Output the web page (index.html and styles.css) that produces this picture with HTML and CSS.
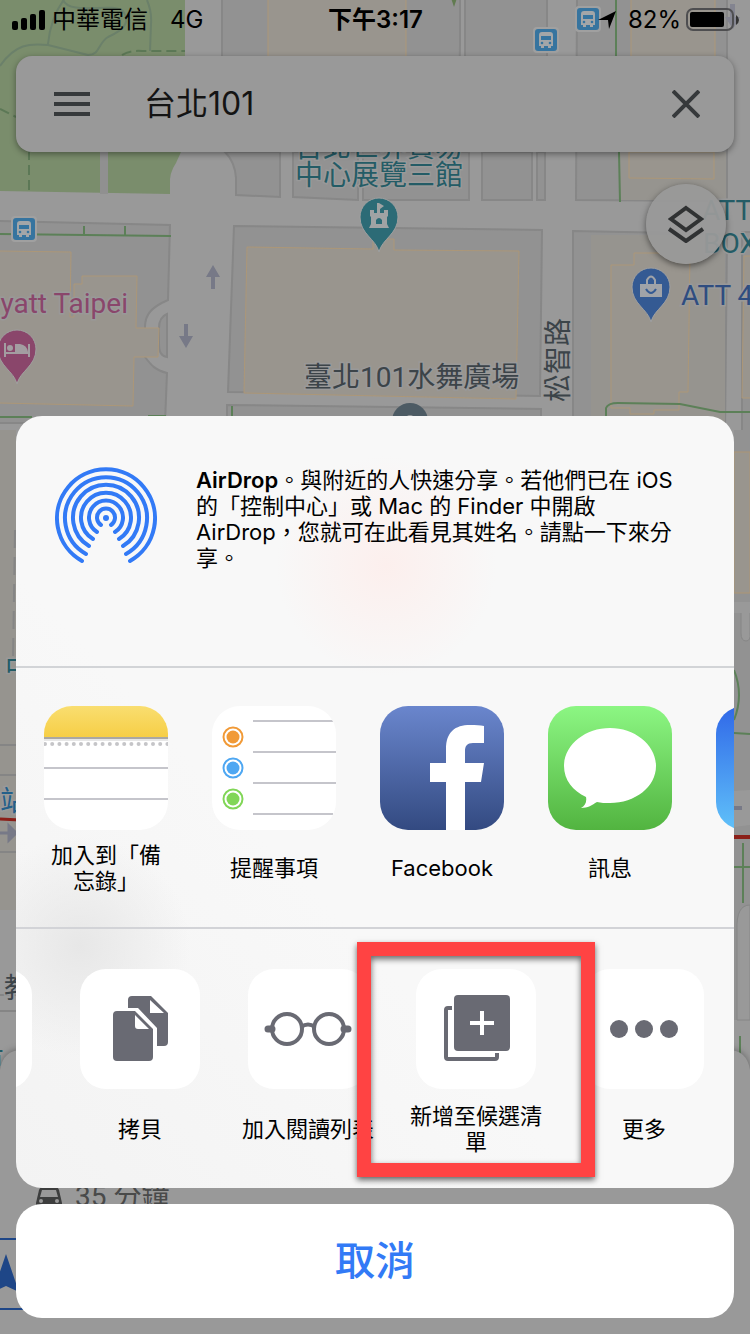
FILE: index.html
```html
<!DOCTYPE html>
<html lang="zh-Hant">
<head>
    <meta charset="UTF-8">
    <meta name="viewport" content="width=device-width, initial-scale=1.0">
    <title>台北101</title>
    <link rel="stylesheet" href="styles.css">
</head>
<body>
    <!-- Map -->
    <svg class="map" viewBox="0 0 750 1334" preserveAspectRatio="xMidYMin slice" aria-hidden="true">
        <defs>
            <g id="bus">
                <rect x="-2" y="-2" width="26" height="26" rx="4" fill="#a0a0a0"/>
                <rect width="22" height="22" rx="3" fill="#36749f"/>
                <path d="M4 6q0-3 3-3h8q3 0 3 3v11h-2v2h-3v-2H9v2H6v-2H4z" fill="#a3a6a8"/>
                <path d="M6 7h10v4H6z" fill="#36749f"/>
                <circle cx="7" cy="14" r="1.3" fill="#36749f"/>
                <circle cx="15" cy="14" r="1.3" fill="#36749f"/>
            </g>
            <path id="pin" d="M0 35C-3 22-19 17-19 0a19 19 0 0 1 38 0C19 17 3 22 0 35z" stroke="#a0a0a0" stroke-width="1"/>
        </defs>

        <g class="park">
            <path d="M0 0h185v53H185v90l-9 20q-7 10-6 22v9L0 191z"/>
        </g>
        <path class="road-fill" d="M100 150h8v44h-8z"/>
        <g class="trail">
            <path d="M0 66c15-22 30-23 48-21l40 10c12 0 10-12 20-18 18-8 22-16 15-26C112 2 70 16 63 0M48 44c2-20 8-34 17-46M147 0q5 12 4 24l-1 27"/>
        </g>
        <path class="dash" d="M122 55q8-5 20-4h43M0 109l16 8M29 150v43"/>

        <g class="block">
            <path d="M222-2h238v45q0 12-2 60H222zM465-2h82v60h-82zM577-2h150v203l-151-1zM225 152q10 10 11 26v17l44 2v-45zM293 152h65v48l-65-3zM363 152h106v48H363zM482 152h50v48h-50zM537 152h8v48h-8z"/>
            <path d="M-2 221l172 4-2 75c-16 7-23 14-23 27v30c6 8 10 13 22 16l-2 50H-2zM234 226l308 4-2 166-312-4z"/>
            <path d="M167 314v43c-6-1-8-5-8-14v-15c0-8 3-12 8-14zM227 405l314 4v20H227zM573 231l154 3-2 200H573zM742 232h12v200h-12z"/>
        </g>
        <path class="plot" d="M591 235h134v200H591zM620 152h106v48H620z"/>

        <g class="building">
            <path d="M268-2h138v60H268zM631-2h84v60h-84zM629 152h85v27l-85-1z"/>
            <path d="M-2 251l73 1-1 65h4v-33h8v-8h55l-1 52h23l-1 29h-24l-1 49-135-3zM247 247l126 2v-10h21v11l125 1-3 148-272-6zM611 265h23v-12h56l-2 139h-9v18h-25v4h-24v-6h-19z"/>
            <path d="M744 256h12v142h-14z"/>
        </g>
        <path class="green-line" d="M0 234l171 2M84 226v9M125 226v9M616-2v60M619 152l1 50M606 430v-22q2-5 12-5l62 1 40 8h34"/>
        <path class="green-line" d="M0 417h32M232 406v10M148 416h18"/>

        <!-- one way arrows -->
        <g fill="#777987">
            <path d="M213 265l7 12h-5v12h-4v-12h-5zM186 348l-7-12h5v-12h4v12h5z"/>
            <path d="M730 4h5v13h5l-7 12-8-12h5z" fill="#838490"/>
        </g>
        <use href="#bus" x="13" y="218"/>
        <use href="#bus" x="577" y="8"/>
        <use href="#bus" x="535" y="29"/>
        <path d="M451-2h6l-3 9z" fill="#617b50"/>

        <!-- left edge beside the sheet -->
        <path d="M0 430h16v480H0z" fill="#96948f"/>
        <path d="M0 745h16M0 775h16" class="thin"/>
        <path d="M15 530l-2 130" class="thin" stroke-dasharray="18 9"/>
        <path d="M0 819l20 1" stroke="#8b1f18" stroke-width="3"/>
        <path d="M0 833h16M9 826v14l7-7z" stroke="#777987" stroke-width="3" fill="#777987"/>
        <path d="M0 852h16M0 995h16M0 1011h16" class="thin"/>

        <!-- right edge beside the sheet -->
        <path d="M734 430h16v610h-16z" fill="#929292"/>
        <path d="M734 452h16v141h-16z" fill="#99958e" stroke="#ac9574"/>
        <path d="M734 602h16v11h-16zM734 791l16-1v35l-16 2zM734 1020h16v40h-16z" fill="#999"/>
        <path d="M741 613v20q0 8 5 8t4-8v-20M737 930q-1-25 13-25v115h-13z" fill="#999" stroke="#868686"/>
        <path d="M734 670q10 25 0 50M734 733l16 1M743 843v60M734 867h16M740 1036v20" class="green-line"/>
        <path d="M734 837h16" stroke="#8b1f18" stroke-width="4"/>
        <path d="M734 808h8" stroke="#777987" stroke-width="4"/>

        <!-- pins -->
        <use href="#pin" x="379" y="217" fill="#2c6b76"/>
        <path d="M370 210h4v3h3v-10h2l5 3-4 3v4h4v-3h4v6l-1 1v7l2 4h-20l2-4v-7l-1-1z" fill="#a0a3a4"/>
        <path d="M376 224v-4q3-4 6 0v4z" fill="#2c6b76"/>
        <use href="#pin" x="17" y="349" fill="#8a466b"/>
        <path d="M5 343v14M5 353h24M29 344v13" stroke="#a39da1" stroke-width="2"/>
        <circle cx="10" cy="348" r="3" fill="#a39da1"/>
        <path d="M15 352v-8h5q7 1 8 8z" fill="#a39da1"/>
        <use href="#pin" x="651" y="287" fill="#345a93"/>
        <path d="M640 284h22v13h-22z" fill="#a0a3a8"/>
        <path d="M647 285v-5q4-7 8 0v5" fill="none" stroke="#a0a3a8" stroke-width="2"/>
        <path d="M646 289q5 8 10 0" fill="none" stroke="#345a93" stroke-width="2"/>
        <circle cx="410" cy="421" r="18" fill="#4d5b64"/>
        <circle cx="410" cy="420" r="5" fill="#969a9c"/>

        <g class="map-text">
            <text x="295" y="157" class="teal">台北世界貿易</text>
            <text x="295" y="185" class="teal">中心展覽三館</text>
            <text x="128" y="313" class="pink" text-anchor="end">Hyatt Taipei</text>
            <text x="304" y="387">臺北101水舞廣場</text>
            <text x="0" y="0" transform="translate(568 402) rotate(-90)">松智路</text>
            <text x="702" y="220" class="teal">ATT</text>
            <text x="703" y="253" class="teal">BOX</text>
            <text x="681" y="305" class="blue">ATT 4</text>
            <text x="5" y="678" class="teal">中</text>
            <text x="0" y="811" class="station">站</text>
            <text x="4" y="998">教</text>
            <text x="-24" y="1072" class="teal">東</text>
        </g>

        <!-- directions panel under the sheet -->
        <path class="panel" d="M0 1334v-264q3-20 22-20h706q19 0 22 20v264z"/>
        <path d="M36 1203l3-13q1-3 4-3h12q3 0 4 3l3 13v14H36z" fill="#3d3e3e"/>
        <path d="M40 1197l2-7h14l2 7z" fill="#999"/>
        <circle cx="41" cy="1201" r="2" fill="#999"/>
        <circle cx="57" cy="1201" r="2" fill="#999"/>
        <text x="75" y="1206" class="duration">35 分鐘</text>
        <path d="M0 1239h30M0 1309h30" stroke="#1e4687" stroke-width="2"/>
        <path d="M6 1254l13 38-13-6-13 6z" fill="#1e4687"/>
    </svg>

    <header class="status-bar">
        <div class="status-left">
            <svg width="34" height="20" viewBox="0 0 34 20" aria-hidden="true">
                <rect x="0" y="11" width="6" height="9" rx="2"/>
                <rect x="9" y="8" width="6" height="12" rx="2"/>
                <rect x="18" y="4" width="6" height="16" rx="2"/>
                <rect x="27" y="0" width="6" height="20" rx="2"/>
            </svg>
            <span>中華電信</span>
            <span class="network">4G</span>
        </div>
        <div class="status-time">下午3:17</div>
        <div class="status-right">
            <svg width="18" height="18" viewBox="0 0 18 18" aria-hidden="true">
                <path d="M18 0L11 18l-1-9H0z"/>
            </svg>
            <span>82%</span>
            <svg width="53" height="24" viewBox="0 0 53 24" aria-hidden="true">
                <rect x="1" y="1" width="46" height="21" rx="6" fill="none" stroke="#4e4e50" stroke-width="2"/>
                <rect x="4" y="4" width="34" height="15" rx="2"/>
                <path d="M50 7q3 2 3 5t-3 5z" fill="#333"/>
            </svg>
        </div>
    </header>

    <form class="search-bar">
        <button type="button" class="icon-button" aria-label="選單">
            <svg width="36" height="24" viewBox="0 0 36 24"><path d="M0 2h36M0 12h36M0 22h36" stroke="#36393b" stroke-width="4"/></svg>
        </button>
        <input type="text" class="search-input" aria-label="搜尋" value="台北101">
        <button type="button" class="icon-button" aria-label="清除">
            <svg width="28" height="28" viewBox="0 0 28 28"><path d="M1 1l26 26M27 1L1 27" stroke="#36393b" stroke-width="4"/></svg>
        </button>
    </form>

    <button type="button" class="layers-button" aria-label="圖層">
        <svg width="36" height="38" viewBox="0 0 36 38" fill="none" stroke="#303233" stroke-width="4">
            <path d="M18 3L33 14 18 25 3 14z"/>
            <path d="M1 24l17 12 17-12"/>
        </svg>
    </button>

    <main class="share">
        <div class="sheet">
            <section class="airdrop">
                <svg class="airdrop-icon" viewBox="0 0 102 102" aria-hidden="true">
                    <circle cx="51" cy="51" r="3" fill="#327af6"/>
                    <g fill="none" stroke="#327af6" stroke-width="4" stroke-linecap="round">
                        <path d="M46 58A9 9 0 1 1 56 58"/>
                        <path d="M42 65A17 17 0 1 1 60 65"/>
                        <path d="M38 72A25 25 0 1 1 64 72"/>
                        <path d="M34 79A33 33 0 1 1 68 79"/>
                        <path d="M31 87A41 41 0 1 1 71 87"/>
                        <path d="M27 94A49 49 0 1 1 75 94"/>
                    </g>
                </svg>
                <p><strong>AirDrop</strong>。與附近的人快速分享。若他們已在 iOS 的「控制中心」或 Mac 的 Finder 中開啟 AirDrop，您就可在此看見其姓名。請點一下來分享。</p>
            </section>

            <section class="row apps">
                <button type="button" class="item">
                    <svg class="app-icon" viewBox="0 0 124 124">
                        <defs>
                            <linearGradient id="notes" x2="0" y2="1"><stop stop-color="#f9de70"/><stop offset="1" stop-color="#f6ce46"/></linearGradient>
                        </defs>
                        <rect width="124" height="124" fill="#fff"/>
                        <rect width="124" height="31" fill="url(#notes)"/>
                        <path d="M0 32h124" stroke="#aaa8a3" stroke-width="2"/>
                        <path d="M0 34h124" stroke="#e7e7e7" stroke-width="2"/>
                        <path d="M1 38h124" stroke="#c5c5c8" stroke-width="4" stroke-linecap="round" stroke-dasharray="0 7.2"/>
                        <path d="M0 62h124M0 93h124" stroke="#c5c5cb" stroke-width="2"/>
                    </svg>
                    <span class="label">加入到「備忘錄」</span>
                </button>
                <button type="button" class="item">
                    <svg class="app-icon" viewBox="0 0 124 124">
                        <rect width="124" height="124" fill="#fff"/>
                        <path d="M41 15h80M41 46h83M41 77h83M41 108h80" stroke="#c5c5cb" stroke-width="2"/>
                        <g fill="none" stroke-width="2">
                            <circle cx="21" cy="31" r="9.5" stroke="#f19a37"/><circle cx="21" cy="31" r="6.5" fill="#f19a37" stroke="none"/>
                            <circle cx="21" cy="62" r="9.5" stroke="#4ea7f2"/><circle cx="21" cy="62" r="6.5" fill="#4ea7f2" stroke="none"/>
                            <circle cx="21" cy="93" r="9.5" stroke="#81d657"/><circle cx="21" cy="93" r="6.5" fill="#81d657" stroke="none"/>
                        </g>
                    </svg>
                    <span class="label">提醒事項</span>
                </button>
                <button type="button" class="item">
                    <svg class="app-icon" viewBox="0 0 124 124">
                        <defs>
                            <linearGradient id="facebook" x2="0" y2="1"><stop stop-color="#6a86cd"/><stop offset="1" stop-color="#334a81"/></linearGradient>
                        </defs>
                        <rect width="124" height="124" fill="url(#facebook)"/>
                        <path d="M66 124V76H50V57h16V43c0-17 9-24 24-24 6 0 10 0 14 1v17H93c-6 0-8 3-8 8v12h19l-3 19H85v48z" fill="#fff"/>
                    </svg>
                    <span class="label">Facebook</span>
                </button>
                <button type="button" class="item">
                    <svg class="app-icon" viewBox="0 0 124 124">
                        <defs>
                            <linearGradient id="messages" x2="0" y2="1"><stop stop-color="#8cf683"/><stop offset="1" stop-color="#52b440"/></linearGradient>
                        </defs>
                        <rect width="124" height="124" fill="url(#messages)"/>
                        <path d="M62 22c25 0 46 17 46 38S87 97 62 97c-5 0-9 0-13-1-5 3-9 6-16 6 4-2 6-6 5-11C25 85 16 74 16 60c0-21 21-38 46-38z" fill="#fff"/>
                    </svg>
                    <span class="label">訊息</span>
                </button>
                <button type="button" class="item" aria-label="郵件">
                    <svg class="app-icon" viewBox="0 0 124 124">
                        <defs>
                            <linearGradient id="mail" x2="0" y2="1"><stop stop-color="#3068e8"/><stop offset="1" stop-color="#60c1f9"/></linearGradient>
                        </defs>
                        <rect width="124" height="124" fill="url(#mail)"/>
                    </svg>
                </button>
            </section>

            <section class="row actions">
                <button type="button" class="item" aria-label="上一個動作">
                    <span class="action-icon"></span>
                </button>
                <button type="button" class="item">
                    <span class="action-icon">
                        <svg width="58" height="68" viewBox="-2 0 58 68" fill="#696a73">
                            <path d="M19 1h19l17 17v29q0 4-4 4h-7V33L25 13H15V5q0-4 4-4zM37 5v13h14z" fill-rule="evenodd"/>
                            <path d="M4 16h18l18 18v28q0 4-4 4H4q-4 0-4-4V20q0-4 4-4zM22 20v11q0 3 3 3h11z" fill-rule="evenodd"/>
                        </svg>
                    </span>
                    <span class="label">拷貝</span>
                </button>
                <button type="button" class="item">
                    <span class="action-icon">
                        <svg width="88" height="34" viewBox="0 0 88 34" fill="none" stroke="#696a73" stroke-width="4">
                            <circle cx="23" cy="17" r="15"/>
                            <circle cx="65" cy="17" r="15"/>
                            <path d="M37 15q7-5 14 0"/>
                            <path d="M4 17h4M80 17h4" stroke-width="7" stroke-linecap="round"/>
                        </svg>
                    </span>
                    <span class="label">加入閱讀列表</span>
                </button>
                <button type="button" class="item highlight">
                    <span class="action-icon">
                        <svg width="68" height="68" viewBox="-2 0 68 68">
                            <rect x="10" y="0" width="56" height="56" rx="4" fill="#696a73"/>
                            <path d="M26 28h24M38 16v24" stroke="#fff" stroke-width="4"/>
                            <path d="M8 13H4q-2 0-2 2v47q0 2 2 2h47q2 0 2-2v-4" fill="none" stroke="#696a73" stroke-width="4"/>
                        </svg>
                    </span>
                    <span class="label">新增至候選清單</span>
                </button>
                <button type="button" class="item">
                    <span class="action-icon">
                        <svg width="68" height="18" viewBox="0 0 68 18" fill="#696a73">
                            <circle cx="9" cy="9" r="9"/>
                            <circle cx="34" cy="9" r="9"/>
                            <circle cx="59" cy="9" r="9"/>
                        </svg>
                    </span>
                    <span class="label">更多</span>
                </button>
            </section>
        </div>

        <button type="button" class="cancel">取消</button>
    </main>
</body>
</html>
```

FILE: styles.css
```css
* {
    box-sizing: border-box;
}

body {
    position: relative;
    display: flex;
    flex-direction: column;
    min-height: 100vh;
    margin: 0;
    overflow: hidden;
    background-color: #999;
    color: #000;
    font-family: Inter, "Noto Sans CJK TC", sans-serif;
    font-size: 22px;
    line-height: 26px;
}

button,
input {
    padding: 0;
    border: 0;
    background: none;
    color: inherit;
    font: inherit;
}

svg {
    flex-shrink: 0;
}

/* Map */
.map {
    position: absolute;
    top: 0;
    left: 0;
    z-index: -1;
    width: 100%;
    height: 100%;
}

.park {
    fill: #7a8d6c;
}

.road-fill {
    fill: #909090;
}

.trail {
    fill: none;
    stroke: #6b806a;
    stroke-width: 2;
}

.dash {
    fill: none;
    stroke: #5c7856;
    stroke-width: 2;
    stroke-dasharray: 10 5;
}

.block {
    fill: #929292;
    stroke: #878787;
    stroke-width: 2;
}

.plot {
    fill: #96948f;
}

.building {
    fill: #99958e;
    stroke: #ac9778;
}

.green-line {
    fill: none;
    stroke: #5c8058;
    stroke-width: 2;
}

.thin {
    fill: none;
    stroke: #858585;
    stroke-width: 2;
}

.map-text {
    fill: #3c4449;
    stroke: #999;
    stroke-width: 3px;
    paint-order: stroke;
    font-family: Roboto, "Noto Sans CJK TC", sans-serif;
    font-size: 28px;
}

.map-text .teal {
    fill: #245c66;
}

.map-text .pink {
    fill: #8a466b;
}

.map-text .blue {
    fill: #2f4d80;
}

.map-text .station {
    fill: #24608a;
}

.panel {
    fill: #999;
    filter: drop-shadow(0 -1px 3px rgba(0, 0, 0, 0.3));
}

.duration {
    fill: #494a4a;
    font-family: Roboto, "Noto Sans CJK TC", sans-serif;
    font-size: 28px;
}

/* Status bar */
.status-bar {
    display: grid;
    grid-template-columns: 1fr auto 1fr;
    align-items: center;
    height: 40px;
    padding: 0 11px 0 12px;
    font-size: 24px;
}

.status-left,
.status-right {
    display: flex;
    align-items: center;
    gap: 6px;
}

.status-right {
    justify-content: flex-end;
    gap: 5px;
}

.status-right span {
    margin-left: 7px;
}

.network {
    margin-left: 16px;
}

.status-time {
    font-weight: 600;
}

/* Search */
.search-bar {
    display: flex;
    align-items: center;
    height: 96px;
    margin: 16px 16px 0;
    padding: 0 34px 0 38px;
    border-radius: 16px;
    background-color: #999;
    box-shadow: 0 2px 6px rgba(0, 0, 0, 0.4);
}

.icon-button {
    display: flex;
}

.search-input {
    flex: 1;
    min-width: 0;
    margin: 0 24px 0 54px;
    color: #141414;
    font-size: 32px;
    line-height: 40px;
}

.layers-button {
    display: flex;
    align-items: center;
    justify-content: center;
    align-self: flex-end;
    width: 80px;
    height: 80px;
    margin: 32px 24px 0 0;
    border-radius: 50%;
    background-color: rgba(153, 153, 153, 0.95);
    box-shadow: 0 2px 6px rgba(0, 0, 0, 0.5);
}

/* Share sheet */
.share {
    margin-top: auto;
    padding: 0 16px 16px;
}

.sheet {
    overflow: hidden;
    border-radius: 26px;
    background-color: #f8f8f8;
    background-image:
        radial-gradient(circle at 370px 150px, #fcefed, rgba(252, 239, 237, 0) 110px),
        radial-gradient(circle at 64px 530px, #e7e7e7, rgba(231, 231, 231, 0) 110px),
        linear-gradient(to top right, #f3f3f3, #f8f8f8 40%);
}

.airdrop {
    display: flex;
    align-items: flex-start;
    gap: 39px;
    min-height: 252px;
    padding: 51px 40px 40px 39px;
    border-bottom: 2px solid #d2d4d7;
}

.airdrop-icon {
    width: 102px;
    height: 102px;
}

.airdrop p {
    margin: 0;
}

.airdrop strong {
    font-weight: 600;
}

.row {
    display: flex;
}

.apps {
    padding: 38px 0 33px 6px;
    border-bottom: 2px solid #d2d3d7;
}

/* the actions are scrolled, so the first one is half hidden */
.actions {
    margin-left: -128px;
    padding: 40px 0 33px;
}

.item {
    position: relative;
    display: flex;
    flex: 0 0 168px;
    flex-direction: column;
    align-items: center;
    gap: 12px;
}

.app-icon {
    width: 124px;
    height: 124px;
    border-radius: 28px;
}

.action-icon {
    display: flex;
    align-items: center;
    justify-content: center;
    width: 120px;
    height: 120px;
    border-radius: 26px;
    background-color: #fff;
}

.label {
    display: flex;
    align-items: center;
    justify-content: center;
    max-width: 124px;
    min-height: 52px;
}

.actions .item {
    gap: 14px;
}

.actions .label {
    max-width: 144px;
}

.highlight {
    z-index: 1;
}

.highlight::after {
    content: "";
    position: absolute;
    top: -27px;
    right: -35px;
    bottom: -22px;
    left: -35px;
    border: 14px solid #ff4343;
    box-shadow: 0 3px 6px rgba(0, 0, 0, 0.6), inset 0 3px 6px rgba(0, 0, 0, 0.6);
}

.cancel {
    display: block;
    width: 100%;
    height: 114px;
    margin-top: 16px;
    border-radius: 26px;
    background-color: #fff;
    color: #327af6;
    font-size: 40px;
    font-weight: 500;
    line-height: 48px;
}
```
